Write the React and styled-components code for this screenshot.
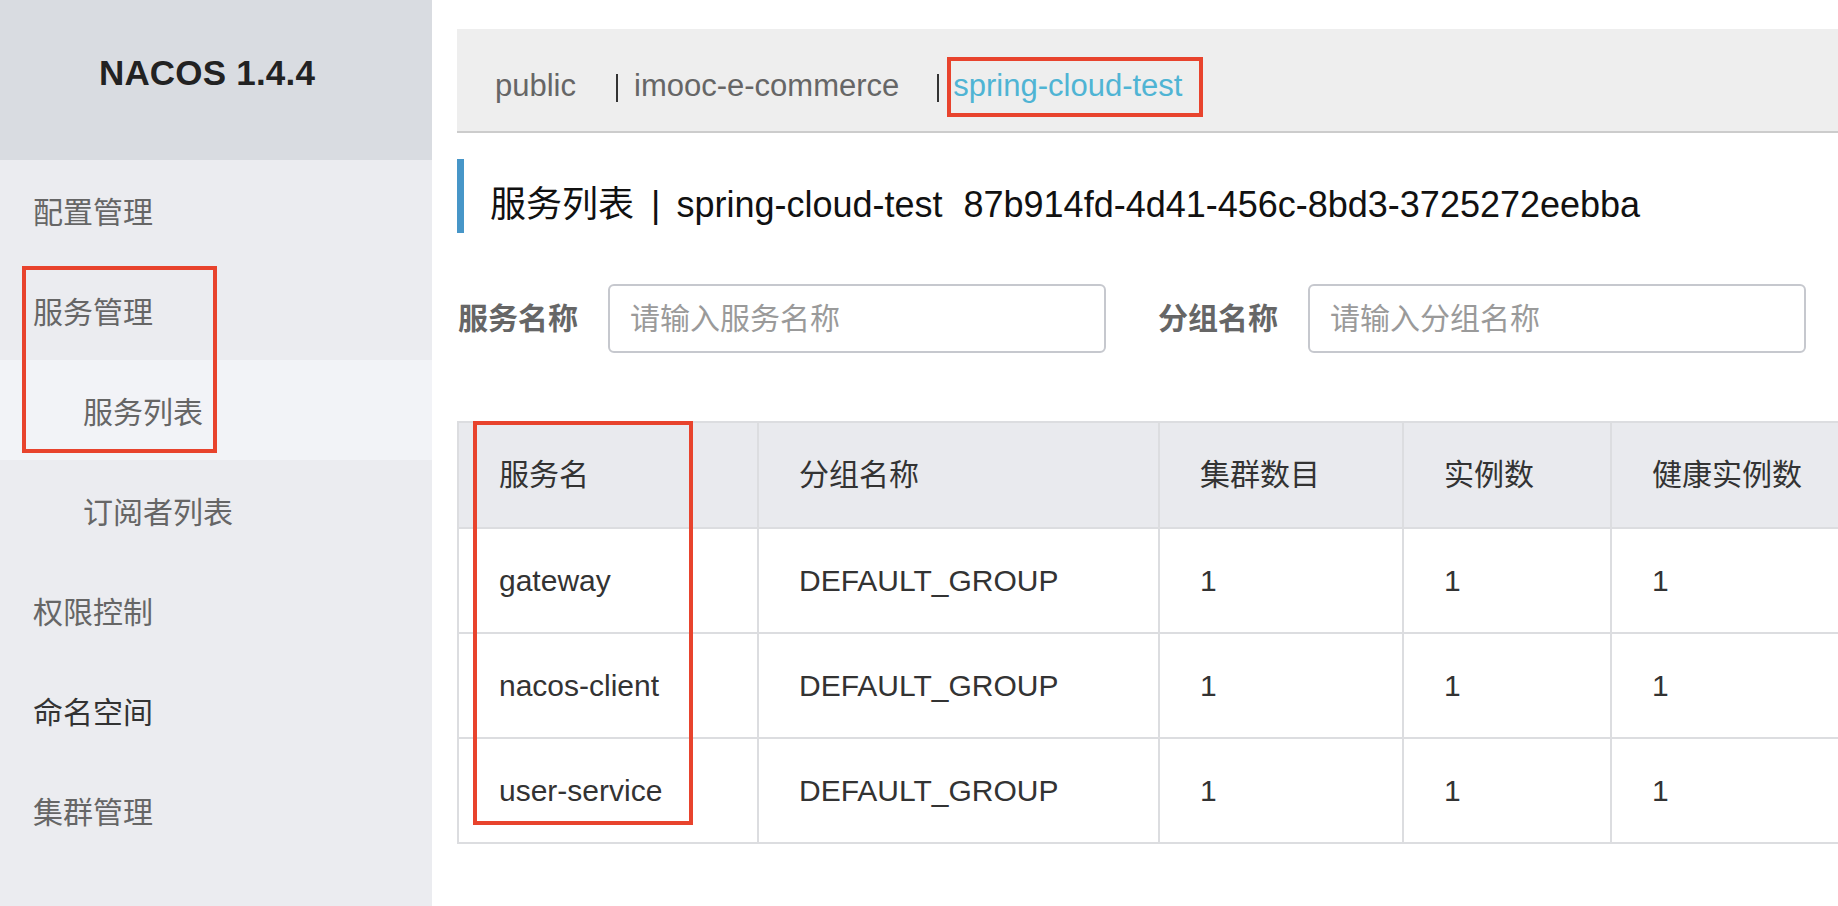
import React from "react";
import styled, { createGlobalStyle } from "styled-components";

const GlobalStyle = createGlobalStyle`
  html, body { margin: 0; padding: 0; background: #fff; }
  body {
    font-family: "Liberation Sans", "Noto Sans CJK SC", sans-serif;
    -webkit-font-smoothing: antialiased;
  }
  *, *::before, *::after { box-sizing: border-box; }
`;

const MARK = "#e8432d";

const Layout = styled.div`
  display: flex;
  width: 100%;
  height: 100vh;
  overflow: hidden;
`;

const Sidebar = styled.aside`
  width: 432px;
  flex: none;
  background: #ebecf0;
  display: flex;
  flex-direction: column;
`;

const Brand = styled.div`
  height: 160px;
  background: #d9dce1;
  display: flex;
  align-items: center;
  justify-content: center;
  padding: 0 18px 15px 0;
  font-size: 35px;
  font-weight: 700;
  color: #222;
  letter-spacing: 0.2px;
`;

const MenuGroup = styled.div`
  position: relative;
`;

const MenuItem = styled.div`
  height: 100px;
  display: flex;
  align-items: center;
  padding-top: 6px;
  padding-left: ${(p) => (p.$sub ? 83 : 33)}px;
  font-size: 30px;
  line-height: 1.2;
  color: ${(p) => (p.$dark ? "#333" : "#666")};
  background: ${(p) => (p.$active ? "#f2f3f7" : "transparent")};
`;

const SideMark = styled.div`
  position: absolute;
  top: 6px;
  left: 22px;
  width: 195px;
  height: 187px;
  border: 4px solid ${MARK};
  pointer-events: none;
`;

const Main = styled.main`
  flex: 1;
  min-width: 0;
  padding-left: 25px;
  overflow: hidden;
`;

const NavBar = styled.nav`
  margin-top: 29px;
  height: 104px;
  background: #eee;
  border-bottom: 2px solid #ccc;
  display: flex;
  align-items: center;
  padding: 12px 0 0 38px;
  white-space: nowrap;
`;

const Tab = styled.span`
  position: relative;
  font-size: 31px;
  line-height: 1.2;
  color: ${(p) => (p.$active ? "#4fb4d4" : "#666")};

  ${(p) =>
    p.$marked &&
    `
    &::after {
      content: "";
      position: absolute;
      left: -6px;
      right: -21px;
      top: calc(50% - 29px);
      height: 60px;
      border: 4px solid ${MARK};
    }
  `}
`;

const TabSep = styled.span`
  display: inline-block;
  width: 2px;
  height: 28px;
  background: #333;
  margin: 4px ${(p) => p.$trail}px 0 ${(p) => p.$lead}px;
`;

const TitleRow = styled.h1`
  margin: 26px 0 0;
  height: 74px;
  border-left: 7px solid #4796c8;
  display: flex;
  align-items: center;
  padding: 17px 0 0 26px;
  font-size: 36px;
  font-weight: 400;
  line-height: 1.2;
  color: #111;
  white-space: nowrap;
`;

const TitleSep = styled.span`
  margin: 0 16px 0 17px;
`;

const TitleId = styled.span`
  margin-left: 21px;
`;

const FilterRow = styled.div`
  margin-top: 51px;
  display: flex;
  align-items: center;
  gap: 52px;
  height: 69px;
`;

const Field = styled.div`
  display: flex;
  align-items: center;
  gap: 30px;
`;

const FieldLabel = styled.label`
  font-size: 30px;
  font-weight: 700;
  color: #666;
  line-height: 1.2;
  padding-left: ${(p) => (p.$first ? 1 : 0)}px;
`;

const Input = styled.input`
  width: 498px;
  height: 69px;
  border: 2px solid #c6c8ce;
  border-radius: 6px;
  padding: 0 20px;
  font-size: 30px;
  font-family: inherit;
  color: #333;
  background: #fff;
  outline: none;

  &::placeholder {
    color: #9a9a9a;
  }
`;

const Grid = styled.div`
  position: relative;
  margin-top: 68px;
  width: max-content;
  display: grid;
  grid-template-columns: 300px 401px 244px 208px 320px;
  border-top: 2px solid #dcdde0;
  border-left: 2px solid #dcdde0;
`;

const Cell = styled.div`
  height: ${(p) => (p.$head ? 106 : 105)}px;
  display: flex;
  align-items: center;
  padding-left: 40px;
  font-size: 30px;
  line-height: 1.2;
  color: #333;
  background: ${(p) => (p.$head ? "#e9eaee" : "#fff")};
  border-right: 2px solid #dcdde0;
  border-bottom: 2px solid #dcdde0;
  white-space: nowrap;
`;

const TableMark = styled.div`
  position: absolute;
  top: -2px;
  left: 14px;
  width: 220px;
  height: 404px;
  border: 4px solid ${MARK};
  pointer-events: none;
`;

const columns = ["服务名", "分组名称", "集群数目", "实例数", "健康实例数"];

const services = [
  { name: "gateway", group: "DEFAULT_GROUP", clusters: 1, instances: 1, healthy: 1 },
  { name: "nacos-client", group: "DEFAULT_GROUP", clusters: 1, instances: 1, healthy: 1 },
  { name: "user-service", group: "DEFAULT_GROUP", clusters: 1, instances: 1, healthy: 1 },
];

export default function App() {
  return (
    <>
      <GlobalStyle />
      <Layout>
        <Sidebar>
          <Brand>NACOS 1.4.4</Brand>
          <MenuItem>配置管理</MenuItem>
          <MenuGroup>
            <MenuItem>服务管理</MenuItem>
            <MenuItem $sub $active>
              服务列表
            </MenuItem>
            <SideMark />
          </MenuGroup>
          <MenuItem $sub>订阅者列表</MenuItem>
          <MenuItem>权限控制</MenuItem>
          <MenuItem $dark>命名空间</MenuItem>
          <MenuItem>集群管理</MenuItem>
        </Sidebar>

        <Main>
          <NavBar>
            <Tab>public</Tab>
            <TabSep $lead={40} $trail={16} />
            <Tab>imooc-e-commerce</Tab>
            <TabSep $lead={38} $trail={14} />
            <Tab $active $marked>
              spring-cloud-test
            </Tab>
          </NavBar>

          <TitleRow>
            <span>服务列表</span>
            <TitleSep>|</TitleSep>
            <span>spring-cloud-test</span>
            <TitleId>87b914fd-4d41-456c-8bd3-3725272eebba</TitleId>
          </TitleRow>

          <FilterRow>
            <Field>
              <FieldLabel $first>服务名称</FieldLabel>
              <Input placeholder="请输入服务名称" />
            </Field>
            <Field>
              <FieldLabel>分组名称</FieldLabel>
              <Input placeholder="请输入分组名称" />
            </Field>
          </FilterRow>

          <Grid>
            {columns.map((c) => (
              <Cell key={c} $head>
                {c}
              </Cell>
            ))}
            {services.map((s) => (
              <React.Fragment key={s.name}>
                <Cell>{s.name}</Cell>
                <Cell>{s.group}</Cell>
                <Cell>{s.clusters}</Cell>
                <Cell>{s.instances}</Cell>
                <Cell>{s.healthy}</Cell>
              </React.Fragment>
            ))}
            <TableMark />
          </Grid>
        </Main>
      </Layout>
    </>
  );
}
